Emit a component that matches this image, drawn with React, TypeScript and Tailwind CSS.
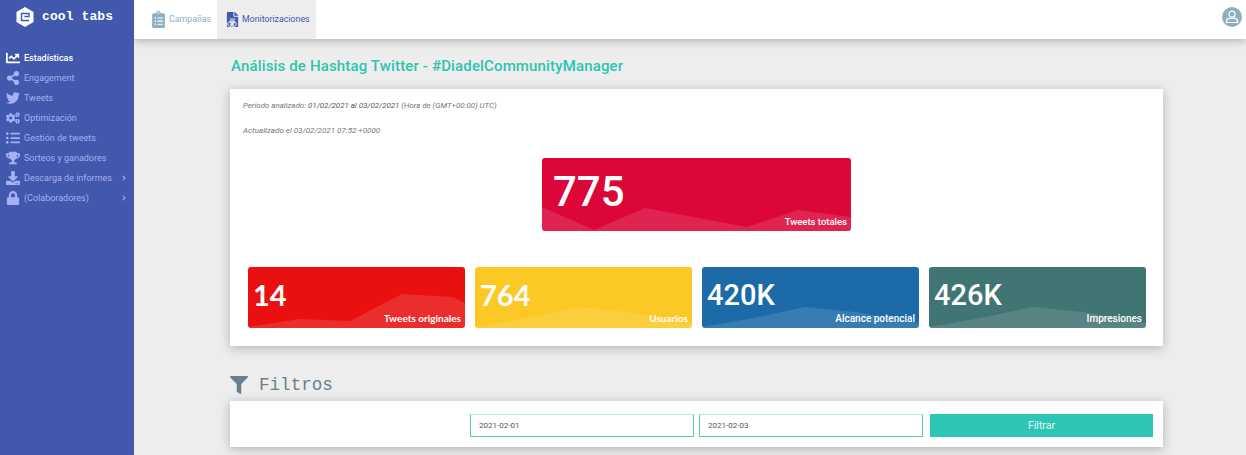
import { FaChartLine, FaChevronRight, FaClipboardList, FaCogs, FaDownload, FaFileAlt, FaFilter, FaListUl, FaLock, FaRegEye, FaShareAlt, FaTrophy, FaTwitter } from "react-icons/fa";

const menu = [
  { label: "Estadísticas", icon: FaChartLine, active: true },
  { label: "Engagement", icon: FaShareAlt },
  { label: "Tweets", icon: FaTwitter },
  { label: "Optimización", icon: FaCogs },
  { label: "Gestión de tweets", icon: FaListUl },
  { label: "Sorteos y ganadores", icon: FaTrophy },
  { label: "Descarga de informes", icon: FaDownload, arrow: true },
  { label: "(Colaboradores)", icon: FaLock, arrow: true },
];

const cards = [
  { value: "14", label: "Tweets originales", bg: "bg-[#ea1010]", font: "font-['Lato',sans-serif] font-bold", points: "0,61 0,60 52,52 102,54 154,27 204,30 217,36 217,61" },
  { value: "764", label: "Usuarios", bg: "bg-[#fcc824]", font: "font-['Lato',sans-serif] font-bold", points: "0,61 0,60 52,51 103,40 153,45 217,56 217,61" },
  { value: "420K", label: "Alcance potencial", bg: "bg-[#1c6ba8]", font: "font-['Roboto',sans-serif] font-medium", points: "0,61 0,60 52,51 103,40 153,45 217,56 217,61" },
  { value: "426K", label: "Impresiones", bg: "bg-[#417574]", font: "font-['Roboto',sans-serif] font-medium", points: "0,61 0,60 52,51 103,40 153,45 217,56 217,61" },
];

const Logo = () => (
  <svg viewBox="0 0 18 20" className="w-[18px] h-[20px] shrink-0">
    <path fill="#fff" d="M9 0l8.5 5v10L9 20 .5 15V5z" />
    <path fill="none" stroke="#4158ac" strokeWidth="1.4" d="M5.5 10V6.5H13v3H8.5M5.5 10v3.5H13" />
  </svg>
);

const Stat = ({ value, label, bg, font, points }: { value: string; label: string; bg: string; font: string; points: string }) => (
  <div className={`relative h-[61px] rounded-[3px] overflow-hidden ${bg}`}>
    <svg viewBox="0 0 217 61" preserveAspectRatio="none" className="absolute inset-0 w-full h-full">
      <polygon points={points} fill="#fff" fillOpacity="0.12" />
    </svg>
    <div className={`relative pl-[5px] pt-[10px] text-white text-[29px] leading-[36px] ${font}`}>{value}</div>
    <div className={`absolute right-[4px] bottom-[3px] text-white text-[10px] leading-[13px] ${font}`}>{label}</div>
  </div>
);

export default function App() {
  return (
    <div className="flex h-[455px] w-[1246px] overflow-hidden bg-[#ededed] font-['Roboto',sans-serif]">
      <aside className="w-[134px] shrink-0 bg-[#4158ac] z-20">
        <div className="h-10 flex items-center pl-[16px] gap-[8px] pb-[7px]">
          <Logo />
          <span className="text-white text-[13px] font-bold font-['Liberation_Mono',monospace] tracking-[0.1px]">cool tabs</span>
        </div>
        <nav className="pt-[8px]">
          {menu.map((item) => (
            <div key={item.label} className={`h-5 flex items-center pl-[6px] text-[9px] ${item.active ? "text-white font-medium" : "text-[#a5b1f5]"}`}>
              <span className="w-[18px] flex shrink-0">
                <item.icon className="text-[14px]" />
              </span>
              <span className="pt-px">{item.label}</span>
              {item.arrow && <FaChevronRight className="absolute left-[121px] text-[6px]" />}
            </div>
          ))}
        </nav>
      </aside>
      <div className="flex-1 min-w-0 flex flex-col">
        <header className="h-[39px] shrink-0 bg-white flex shadow-[0_2px_8px_rgba(0,0,0,0.25)] z-10">
          <div className="w-[83px] flex items-center pl-[16px] gap-[2px] text-[#8fb0c0] text-[8.8px]">
            <FaClipboardList className="text-[17px] shrink-0" />
            <span>Campañas</span>
          </div>
          <div className="w-[99px] flex items-center pl-[8px] gap-[2px] bg-[#ededed] text-[#4158ac] text-[8.8px]">
            <span className="relative flex shrink-0">
              <FaFileAlt className="text-[15px]" />
              <FaRegEye className="absolute left-[2px] top-[7px] text-[10px] text-[#ededed]" />
            </span>
            <span>Monitorizaciones</span>
          </div>
          <div className="ml-auto pr-[4px] pt-[7px]">
            <svg viewBox="0 0 20 20" className="w-5 h-5">
              <circle cx="10" cy="10" r="10" fill="#8eb0bf" />
              <circle cx="10" cy="7.2" r="3" fill="none" stroke="#fff" strokeWidth="1.2" />
              <path d="M4.5 15.5v-1.2c0-2 1.6-3 3-3h5c1.4 0 3 1 3 3v1.2z" fill="none" stroke="#fff" strokeWidth="1.2" />
            </svg>
          </div>
        </header>
        <main className="flex-1 pl-[96px] pr-[83px]">
          <h1 className="mt-[17px] h-5 text-[15px] leading-5 font-medium text-[#2ec4b0] tracking-[0.15px] whitespace-nowrap pl-px">Análisis de Hashtag Twitter - #DiadelCommunityManager</h1>
          <section className="mt-[13px] h-[257px] bg-white pl-[18px] pr-[17px] shadow-[0_2px_10px_rgba(0,0,0,0.25)]">
            <div className="pt-[11px] -ml-[5px] text-[7.9px] leading-[11px] italic text-[#777]">
              Periodo analizado: <span className="text-[#555]">01/02/2021 al 03/02/2021</span> (Hora de (GMT+00:00) UTC)
            </div>
            <div className="mt-[14px] -ml-[5px] text-[8px] leading-[11px] italic text-[#777]">Actualizado el 03/02/2021 07:52 +0000</div>
            <div className="mt-[22px] flex justify-center pr-px">
              <div className="relative w-[309px] h-[73px] rounded-[3px] overflow-hidden bg-[#dc0639]">
                <svg viewBox="0 0 309 73" className="absolute inset-0 w-full h-full">
                  <polygon points="0,73 0,49 52,72 103,50 205,69 256,52 309,59 309,73" fill="#fff" fillOpacity="0.12" />
                </svg>
                <div className="relative pl-[11px] pt-[9px] text-white text-[42px] leading-[50px] font-medium font-['Roboto',sans-serif]">775</div>
                <div className="absolute right-[4px] bottom-[3px] text-white text-[9.5px] leading-[13px] font-medium font-['Roboto',sans-serif]">Tweets totales</div>
              </div>
            </div>
            <div className="mt-[36px] grid grid-cols-4 gap-[10px]">
              {cards.map((card) => (
                <Stat key={card.label} {...card} />
              ))}
            </div>
          </section>
          <h2 className="mt-[27px] h-[24px] flex items-center text-[#6a7f8c] text-[17.6px] font-['Liberation_Mono',monospace]">
            <FaFilter className="text-[18px] mr-[11px]" />
            Filtros
          </h2>
          <section className="mt-[4px] h-[46px] bg-white shadow-[0_2px_10px_rgba(0,0,0,0.25)] grid grid-cols-[235px_224px_224px_225px] gap-x-[5px] items-center pr-[10px] pt-[3px]">
            <div />
            <div className="h-[23px] border border-[#5cc9b5] border-t-[#b8ebe3] flex items-center pl-2 text-[8px] text-[#555]">2021-02-01</div>
            <div className="h-[23px] border border-[#5cc9b5] border-t-[#b8ebe3] flex items-center pl-2 text-[8px] text-[#555]">2021-02-03</div>
            <button className="ml-[2px] h-[23px] bg-[#2dc5b5] text-[#e4f8f5] text-[10.5px]">Filtrar</button>
          </section>
        </main>
      </div>
    </div>
  );
}
